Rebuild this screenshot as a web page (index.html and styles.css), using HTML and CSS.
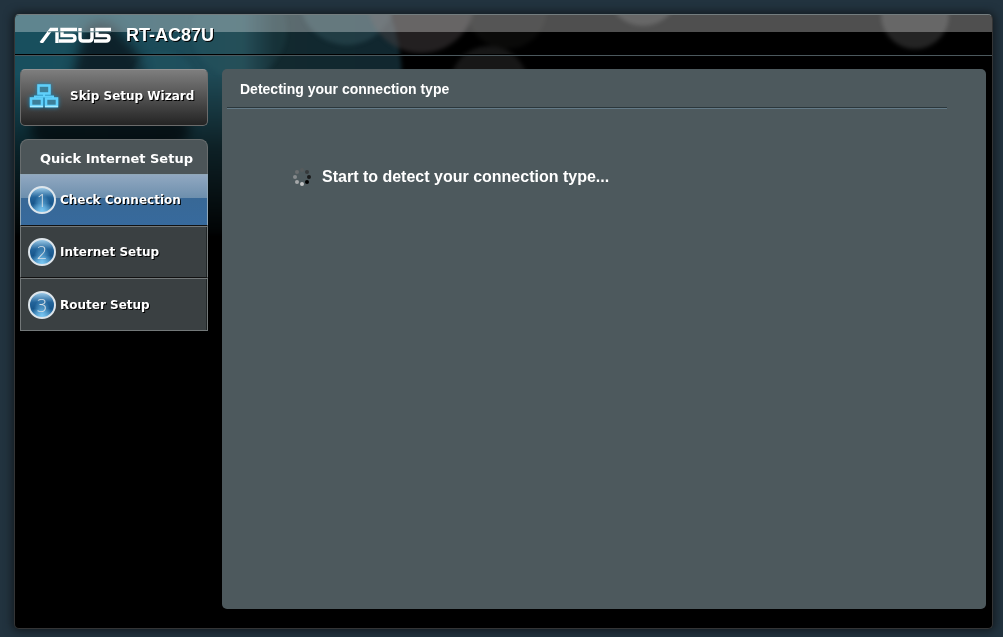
FILE: index.html
```html
<!DOCTYPE html>
<html lang="en">
<head>
<meta charset="utf-8">
<title>ASUS Wireless Router RT-AC87U</title>
<link rel="stylesheet" href="styles.css">
</head>
<body>
<div class="frame">
  <svg class="bokeh" viewBox="0 0 978 240" width="978" height="240" aria-hidden="true">
    <defs>
      <linearGradient id="teal" x1="0" y1="0" x2="1" y2="0">
        <stop offset="0" stop-color="#17505f"/><stop offset=".5" stop-color="#1d4a57"/><stop offset=".61" stop-color="#234a54"/><stop offset=".69" stop-color="#12292f"/><stop offset="1" stop-color="#11272f"/>
      </linearGradient>
      <linearGradient id="fade" x1="0" y1="0" x2="0" y2="1">
        <stop offset="0.25" stop-color="#000" stop-opacity="0"/><stop offset=".55" stop-color="#000" stop-opacity=".55"/><stop offset=".95" stop-color="#000"/>
      </linearGradient>
      <filter id="soft" x="-20%" y="-20%" width="140%" height="140%" color-interpolation-filters="sRGB"><feGaussianBlur stdDeviation="6"/></filter>
      <filter id="edge" x="-20%" y="-20%" width="140%" height="140%" color-interpolation-filters="sRGB"><feGaussianBlur stdDeviation="2"/></filter>
    </defs>
    <path d="M-20-20H368Q388 25 387 70Q300 190 210 220H-20Z" fill="url(#teal)" filter="url(#edge)"/>
    <path d="M72 12Q92-2 108 22Q138 48 128 90H52Q60 40 72 12Z" fill="#0b171e" opacity=".8" filter="url(#soft)"/>
    <ellipse cx="95" cy="115" rx="80" ry="30" fill="#050d12" opacity=".7" filter="url(#soft)"/>
    <g filter="url(#edge)">
      <circle cx="148" cy="70" r="34" fill="#286675" opacity=".2"/>
      <circle cx="224" cy="15" r="48" fill="#36717c" opacity=".12"/>
      <circle cx="332" cy="-18" r="48" fill="#40646d" opacity=".35"/>
      <circle cx="406" cy="-16" r="54" fill="#464042" opacity=".5"/>
      <circle cx="474" cy="70" r="39" fill="#171717"/>
      <circle cx="492" cy="-6" r="40" fill="#20201f" opacity=".3"/>
      <circle cx="628" cy="-25" r="36" fill="#777" opacity=".3"/>
      <circle cx="900" cy="0" r="34" fill="#3c3c3c" opacity=".6"/>
    </g>
    <rect width="978" height="240" fill="url(#fade)"/>
  </svg>

  <header class="header">
    <svg class="logo" viewBox="0 0 72 16" width="72" height="16" role="img" aria-label="ASUS" fill="none" stroke="#fff" stroke-width="3.4">
      <path d="M2 16 12 2.500H19M18 5V16"/>
      <path d="M38 2.500H23V8.500H33Q36 8.500 36 11.200T33 14H20"/>
      <path d="M41 1V11Q41 14 44 14H50Q53 14 53 11V1"/>
      <path d="M72 2.500H58V8.500H67Q70 8.500 70 11.200T67 14H55"/>
      <path d="M9 4.800H72" stroke="#5b7f88" stroke-width="1"/>
    </svg>
    <span class="model">RT-AC87U</span>
  </header>

  <div class="body">
    <aside class="sidebar">
      <button class="skip" type="button">
        <svg class="network" viewBox="0 0 30 24" width="30" height="24" aria-hidden="true" fill="#3c7f99" stroke="#5fd0fb" stroke-width="2.600">
          <path d="M15 10V13M6 15V12.500H24V15" fill="none" stroke-width="2"/>
          <rect x="9.500" y="1.500" width="11" height="8"/>
          <rect x="2" y="14.500" width="11" height="7.500"/>
          <rect x="17" y="14.500" width="11" height="7.500"/>
          <path d="M1 22.500H14M16 22.500H29" stroke="#a6ebff" stroke-width="1.500"/>
        </svg>
        <span>Skip Setup Wizard</span>
      </button>

      <nav class="menu" aria-labelledby="menu-title">
        <h2 class="menu-title" id="menu-title">Quick Internet Setup</h2>
        <ol class="steps">
          <li class="step current" aria-current="step"><span class="number">1</span>Check Connection</li>
          <li class="step"><span class="number">2</span>Internet Setup</li>
          <li class="step"><span class="number">3</span>Router Setup</li>
        </ol>
      </nav>
    </aside>

    <main class="panel">
      <h1 class="panel-title">Detecting your connection type</h1>
      <div class="status" role="status">
        <svg class="spinner" viewBox="0 0 20 20" width="20" height="20" aria-hidden="true">
          <circle cx="10" cy="3" r="2" fill="#555b5d"/>
          <circle cx="15" cy="5" r="2" fill="#363a3c"/>
          <circle cx="17" cy="10" r="2" fill="#181a1b"/>
          <circle cx="15" cy="15" r="2" fill="#000"/>
          <circle cx="10" cy="17" r="2" fill="#c2c4c5"/>
          <circle cx="5" cy="15" r="2" fill="#a5a8a9"/>
          <circle cx="3" cy="10" r="2" fill="#868b8d"/>
          <circle cx="5" cy="5" r="2" fill="#6a6e70"/>
        </svg>
        <span>Start to detect your connection type...</span>
      </div>
    </main>
  </div>
</div>
</body>
</html>
```
FILE: styles.css
```css
* {
  box-sizing: border-box;
}

body {
  margin: 0;
  min-height: 100vh;
  display: flex;
  padding: 14px 10px 8px 14px;
  background: #22333f;
  color: #fff;
  font-family: "Liberation Sans", Arial, sans-serif;
  font-weight: bold;
}

.frame {
  flex: 1;
  display: flex;
  flex-direction: column;
  position: relative;
  isolation: isolate;
  overflow: hidden;
  border: 1px solid #343536;
  border-top-color: #747d7f;
  border-radius: 5px;
  background: #000;
  box-shadow: 0 0 8px 2px #141b20;
}

.bokeh {
  position: absolute;
  top: 0;
  left: 0;
  z-index: -1;
}

.header {
  display: flex;
  align-items: center;
  gap: 15px;
  height: 41px;
  padding-left: 24px;
  border-bottom: 1px solid #4b585d;
  background: linear-gradient(rgba(255, 255, 255, 0.31) 17px, transparent 17px);
  box-shadow: inset 0 -1px #000;
}

.model {
  font-size: 18px;
  line-height: 24px;
  text-shadow: 1px 1px #000;
}

.body {
  flex: 1;
  display: flex;
  gap: 14px;
  padding: 13px 6px 19px 5px;
}

.sidebar {
  width: 188px;
  font-family: Verdana, "DejaVu Sans", sans-serif;
}

.skip {
  display: flex;
  align-items: center;
  gap: 11px;
  width: 100%;
  height: 57px;
  margin-bottom: 13px;
  padding: 0 0 4px 8px;
  border: 1px solid #6b6b6b;
  border-top-color: #929292;
  border-radius: 5px;
  background: linear-gradient(#7e7e7e, #242424);
  color: #fff;
  font: bold 12px/18px Verdana, "DejaVu Sans", sans-serif;
  text-shadow: 1px 1px #000;
  white-space: nowrap;
}

.network {
  flex: none;
  filter: drop-shadow(0 0 2px #148bc0);
}

.menu-title {
  margin: 0;
  height: 35px;
  padding: 2px 0 0 19px;
  border: 1px solid #686d6e;
  border-bottom: 0;
  border-radius: 8px 8px 0 0;
  background: #4c5558;
  font-size: 13px;
  line-height: 34px;
  white-space: nowrap;
}

.steps {
  margin: 0;
  padding: 0;
  list-style: none;
}

.step {
  display: flex;
  align-items: center;
  gap: 4px;
  height: 52px;
  padding-left: 7px;
  border: 1px solid #737879;
  border-bottom-color: #111;
  background: #3a4042;
  box-shadow: inset -1px 0 #202526;
  font-size: 12px;
  line-height: 18px;
  text-shadow: 1px 1px #000;
  white-space: nowrap;
}

.step:last-child {
  height: 53px;
  border-bottom-color: #737879;
}

.current {
  border-color: #91a8b9;
  border-bottom-color: #111;
  background: linear-gradient(#91a8c1, #6d8fad 23px, #386896 23px, #376a9d);
  box-shadow: none;
}

.number {
  display: grid;
  place-items: center;
  flex: none;
  width: 28px;
  height: 28px;
  border: 2px solid #dde5eb;
  border-radius: 50%;
  background: radial-gradient(ellipse at 50% 100%, #7ac8f4, transparent 55%), linear-gradient(#9ac9e7, #24659b 38%, #17568c 65%, #549ccb);
  color: #d8e0e6;
  font: 300 18px/24px "Open Sans", sans-serif;
  text-shadow: none;
}

.panel {
  flex: 1;
  padding: 0 39px 0 5px;
  border-radius: 5px;
  background: #4d595d;
}

.panel-title {
  margin: 0;
  height: 40px;
  padding: 11px 13px 0;
  border-bottom: 1px solid #647a87;
  box-shadow: inset 0 -1px #2b373b;
  font-size: 14px;
  line-height: 18px;
}

.status {
  display: flex;
  align-items: center;
  gap: 10px;
  padding: 57px 0 0 65px;
  font-size: 16px;
  line-height: 22px;
}

.spinner {
  flex: none;
}
```
